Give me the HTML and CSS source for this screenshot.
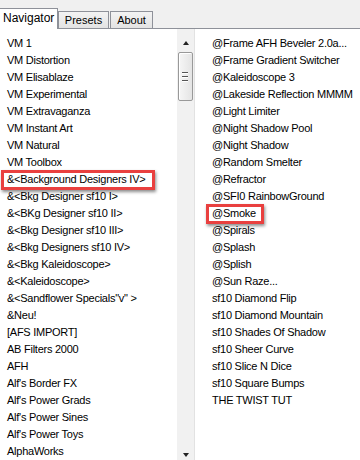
FILE: index.html
```html
<!DOCTYPE html>
<html lang="en">
<head>
    <meta charset="UTF-8">
    <meta name="viewport" content="width=device-width, initial-scale=1.0">
    <title>Filters Navigator</title>
    <link rel="stylesheet" href="styles.css">
</head>
<body>

<div class="tabs">
    <div class="tab active">Navigator</div>
    <div class="tab presets">Presets</div>
    <div class="tab about">About</div>
</div>

<div class="panel">
    <ul class="list left">
        <li>VM 1</li>
        <li>VM Distortion</li>
        <li>VM Elisablaze</li>
        <li>VM Experimental</li>
        <li>VM Extravaganza</li>
        <li>VM Instant Art</li>
        <li>VM Natural</li>
        <li>VM Toolbox</li>
        <li><span class="mark">&amp;&lt;Background Designers IV&gt;</span></li>
        <li>&amp;&lt;Bkg Designer sf10 I&gt;</li>
        <li>&amp;&lt;BKg Designer sf10 II&gt;</li>
        <li>&amp;&lt;Bkg Designer sf10 III&gt;</li>
        <li>&amp;&lt;Bkg Designers sf10 IV&gt;</li>
        <li>&amp;&lt;Bkg Kaleidoscope&gt;</li>
        <li>&amp;&lt;Kaleidoscope&gt;</li>
        <li>&amp;&lt;Sandflower Specials"v" &gt;</li>
        <li>&amp;Neu!</li>
        <li>[AFS IMPORT]</li>
        <li>AB Filters 2000</li>
        <li>AFH</li>
        <li>Alf's Border FX</li>
        <li>Alf's Power Grads</li>
        <li>Alf's Power Sines</li>
        <li>Alf's Power Toys</li>
        <li>AlphaWorks</li>
    </ul>

    <div class="scrollbar">
        <span class="arrow up"></span>
        <div class="thumb">
            <i></i><i></i><i></i>
        </div>
        <span class="arrow down"></span>
    </div>

    <ul class="list right">
        <li>@Frame AFH Beveler 2.0a...</li>
        <li>@Frame Gradient Switcher</li>
        <li>@Kaleidoscope 3</li>
        <li>@Lakeside Reflection MMMM</li>
        <li>@Light Limiter</li>
        <li>@Night Shadow Pool</li>
        <li>@Night Shadow</li>
        <li>@Random Smelter</li>
        <li>@Refractor</li>
        <li>@SFI0 RainbowGround</li>
        <li><span class="mark small">@Smoke</span></li>
        <li>@Spirals</li>
        <li>@Splash</li>
        <li>@Splish</li>
        <li>@Sun Raze...</li>
        <li>sf10 Diamond Flip</li>
        <li>sf10 Diamond Mountain</li>
        <li>sf10 Shades Of Shadow</li>
        <li>sf10 Sheer Curve</li>
        <li>sf10 Slice N Dice</li>
        <li>sf10 Square Bumps</li>
        <li>THE TWIST TUT</li>
    </ul>
</div>

</body>
</html>
```

FILE: styles.css
```css
body {
    margin: 0;
    font-family: "Liberation Sans", Arial, sans-serif;
    background-color: #f0f0f0;
    color: #000;
    overflow: hidden;
    height: 460px;
}
.tabs {
    display: flex;
    align-items: flex-end;
    height: 29px;
    box-sizing: border-box;
    border-bottom: 1px solid #8e9199;
}
.tab {
    box-sizing: border-box;
    height: 17px;
    border: 1px solid #8e9199;
    border-bottom: none;
    background: linear-gradient(#f3f3f3, #e3e3e3);
    font-size: 11px;
    text-align: center;
    line-height: 16px;
}
.tab.active {
    width: 59px;
    height: 21px;
    margin-left: -1px;
    margin-bottom: -1px;
    background: #fff;
    font-size: 12px;
    line-height: 19px;
    padding-left: 1px;
    text-align: left;
    padding-left: 3px;
}
.tab.presets {
    width: 51px;
}
.tab.about {
    width: 43px;
    margin-left: 1px;
}
.panel {
    display: flex;
    height: 431px;
    background-color: #fff;
}
.list {
    list-style: none;
    margin: 0;
    padding: 6px 0 0;
    font-size: 11px;
    letter-spacing: -0.25px;
}
.list li {
    height: 17px;
    line-height: 17px;
    white-space: nowrap;
}
.left {
    width: 170px;
    padding-left: 7px;
}
.right {
    flex: 1;
    padding-left: 17px;
}
.mark {
    position: relative;
    display: inline-block;
}
.mark::after {
    content: "";
    position: absolute;
    left: -6px;
    right: -10px;
    top: -1px;
    bottom: -2px;
    border: 3px solid #e9403f;
    box-shadow: 1px 2px 3px rgba(0, 0, 0, 0.45);
}
.mark.small::after {
    right: -8px;
}
.scrollbar {
    width: 18px;
    box-sizing: border-box;
    display: flex;
    flex-direction: column;
    align-items: center;
    background-color: #f1f1f1;
    border-right: 1px solid #e2e2e2;
}
.arrow {
    width: 0;
    height: 0;
    border-left: 3px solid transparent;
    border-right: 3px solid transparent;
}
.arrow.up {
    margin-top: 12px;
    border-bottom: 4px solid #222;
}
.arrow.down {
    margin-top: auto;
    margin-bottom: 3px;
    border-top: 4px solid #222;
}
.thumb {
    box-sizing: border-box;
    width: 15px;
    height: 49px;
    margin-top: 7px;
    margin-left: -1px;
    border: 1px solid #999;
    border-radius: 2px;
    background: linear-gradient(to right, #f6f6f6, #e4e4e4);
    box-shadow: inset 1px 1px 0 #fff;
    display: flex;
    flex-direction: column;
    align-items: center;
    justify-content: center;
    gap: 2px;
}
.thumb i {
    width: 6px;
    height: 1px;
    background-color: #555;
    border-bottom: 1px solid #fff;
}
```
